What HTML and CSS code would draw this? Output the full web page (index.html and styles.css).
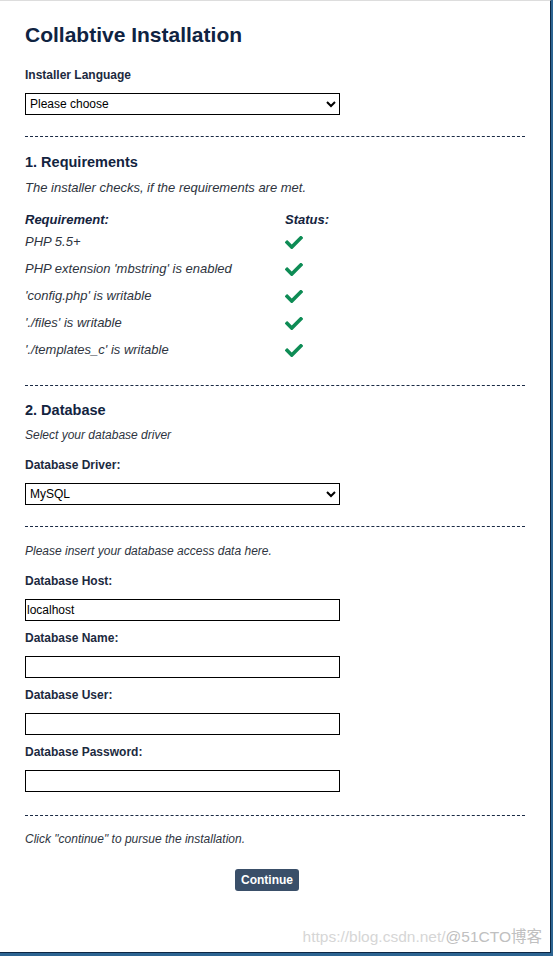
FILE: index.html
```html
<!DOCTYPE html>
<html lang="en">
<head>
<meta charset="utf-8">
<title>Collabtive Installation</title>
<link rel="stylesheet" href="styles.css">
</head>
<body>
<div class="page">
  <div class="content">
    <h1 class="title">Collabtive Installation</h1>
    <div class="label label-lang">Installer Language</div>
    <select class="field field-select"><option>Please choose</option></select>

    <div class="sep sep-a"></div>
    <h2 class="section section-req">1. Requirements</h2>
    <p class="note note-req">The installer checks, if the requirements are met.</p>
    <div class="req">
      <div class="req-head">Requirement:</div><div class="req-head">Status:</div>
      <div class="req-name">PHP 5.5+</div>
      <div class="req-status"><svg class="check" viewBox="7 72 498 368"><path d="M173.9 439.4l-166.4-166.4c-10-10-10-26.2 0-36.2l36.2-36.2c10-10 26.2-10 36.2 0L192 312.7 432.1 72.6c10-10 26.2-10 36.2 0l36.2 36.2c10 10 10 26.2 0 36.2l-294.4 294.4c-10 10-26.2 10-36.2 0z"/></svg></div>
      <div class="req-name">PHP extension 'mbstring' is enabled</div>
      <div class="req-status"><svg class="check" viewBox="7 72 498 368"><path d="M173.9 439.4l-166.4-166.4c-10-10-10-26.2 0-36.2l36.2-36.2c10-10 26.2-10 36.2 0L192 312.7 432.1 72.6c10-10 26.2-10 36.2 0l36.2 36.2c10 10 10 26.2 0 36.2l-294.4 294.4c-10 10-26.2 10-36.2 0z"/></svg></div>
      <div class="req-name">'config.php' is writable</div>
      <div class="req-status"><svg class="check" viewBox="7 72 498 368"><path d="M173.9 439.4l-166.4-166.4c-10-10-10-26.2 0-36.2l36.2-36.2c10-10 26.2-10 36.2 0L192 312.7 432.1 72.6c10-10 26.2-10 36.2 0l36.2 36.2c10 10 10 26.2 0 36.2l-294.4 294.4c-10 10-26.2 10-36.2 0z"/></svg></div>
      <div class="req-name">'./files' is writable</div>
      <div class="req-status"><svg class="check" viewBox="7 72 498 368"><path d="M173.9 439.4l-166.4-166.4c-10-10-10-26.2 0-36.2l36.2-36.2c10-10 26.2-10 36.2 0L192 312.7 432.1 72.6c10-10 26.2-10 36.2 0l36.2 36.2c10 10 10 26.2 0 36.2l-294.4 294.4c-10 10-26.2 10-36.2 0z"/></svg></div>
      <div class="req-name">'./templates_c' is writable</div>
      <div class="req-status"><svg class="check" viewBox="7 72 498 368"><path d="M173.9 439.4l-166.4-166.4c-10-10-10-26.2 0-36.2l36.2-36.2c10-10 26.2-10 36.2 0L192 312.7 432.1 72.6c10-10 26.2-10 36.2 0l36.2 36.2c10 10 10 26.2 0 36.2l-294.4 294.4c-10 10-26.2 10-36.2 0z"/></svg></div>
    </div>

    <div class="sep sep-b"></div>
    <h2 class="section section-db">2. Database</h2>
    <p class="note note-db">Select your database driver</p>
    <div class="label label-driver">Database Driver:</div>
    <select class="field field-select"><option>MySQL</option></select>

    <div class="sep sep-a"></div>
    <p class="note note-access">Please insert your database access data here.</p>
    <div class="label label-host">Database Host:</div>
    <input class="field field-input" type="text" value="localhost">
    <div class="label label-next">Database Name:</div>
    <input class="field field-input" type="text">
    <div class="label label-next">Database User:</div>
    <input class="field field-input" type="text">
    <div class="label label-next">Database Password:</div>
    <input class="field field-input" type="password">

    <div class="sep sep-c"></div>
    <p class="note note-click">Click "continue" to pursue the installation.</p>
    <div class="actions"><button class="btn" type="button">Continue</button></div>
  </div>
  <div class="watermark">https://blog.csdn.net/<span class="wm-brand">@51CTO博客</span></div>
</div>
</body>
</html>
```

FILE: styles.css
```css
html {
  background: #2d6592;
}
body {
  margin: 0;
  font-family: "Liberation Sans", Arial, "Noto Sans CJK SC", sans-serif;
  font-size: 12px;
  line-height: 14px;
  color: #1f2a3a;
}
.page {
  position: relative;
  box-sizing: border-box;
  width: 551px;
  height: 953px;
  background: #fff;
  border-top: 1px solid #dddddd;
  border-right: 1px solid #0c2744;
  border-bottom: 1px solid #0c2744;
}
.content {
  padding: 22px 0 0 25px;
  width: 500px;
}
.title {
  margin: 0;
  font-size: 21px;
  line-height: 24px;
  font-weight: 700;
  color: #0f2342;
}
.label {
  font-weight: 700;
  color: #1c2a40;
}
.label-lang { margin-top: 21px; }
.label-driver { margin-top: 16px; }
.label-host { margin-top: 16px; }
.label-next { margin-top: 10px; }

.field {
  display: block;
  box-sizing: border-box;
  width: 315px;
  height: 22px;
  margin: 11px 0 0;
  border: 1px solid #000;
  border-radius: 0;
  background: #fff;
  color: #000;
  font-family: "Liberation Sans", Arial, sans-serif;
  font-size: 12px;
}
.field-select {
  padding: 0;
}
.field-input {
  padding: 0 1px;
}

.sep {
  height: 0;
  border-top: 1px dashed #1a2a44;
}
.sep-a { margin-top: 21px; }
.sep-b { margin-top: 22px; }
.sep-c { margin-top: 23px; }

.section {
  margin: 0;
  font-size: 14.5px;
  line-height: 17px;
  font-weight: 700;
  color: #13243f;
}
.section-req { margin-top: 17px; }
.section-db { margin-top: 16px; }

.note {
  margin: 0;
  font-style: italic;
  color: #2e3440;
}
.note-req {
  margin-top: 9px;
  font-size: 13px;
  line-height: 15px;
}
.note-db { margin-top: 9px; }
.note-access { margin-top: 17px; }
.note-click { margin-top: 16px; }

.req {
  margin-top: 17px;
  display: grid;
  grid-template-columns: 260px 1fr;
  grid-template-rows: 16px;
  grid-auto-rows: 27px;
  align-items: center;
  font-size: 13px;
  line-height: 15px;
}
.req-head {
  align-self: start;
  font-weight: 700;
  font-style: italic;
  color: #14233d;
}
.req-name {
  font-style: italic;
  color: #2e3440;
}
.req-status {
  display: flex;
  align-items: center;
}
.check {
  display: block;
  width: 18px;
  height: 13px;
  margin-top: 2px;
  fill: #0e8c55;
}

.actions {
  margin-top: 23px;
  padding-left: 210px;
}
.btn {
  display: block;
  box-sizing: border-box;
  width: 64px;
  height: 22px;
  padding: 0;
  border: 0;
  border-radius: 3px;
  background: #3a4f69;
  color: #fff;
  font-family: "Liberation Sans", Arial, sans-serif;
  font-size: 12px;
  font-weight: 700;
}

.watermark {
  position: absolute;
  right: 8px;
  top: 927px;
  font-family: "Liberation Sans", Arial, "Noto Sans CJK SC", sans-serif;
  font-size: 15.5px;
  line-height: 18px;
  color: #d6d6d6;
  white-space: nowrap;
}
.wm-brand {
  color: #c0c0c0;
}
```
